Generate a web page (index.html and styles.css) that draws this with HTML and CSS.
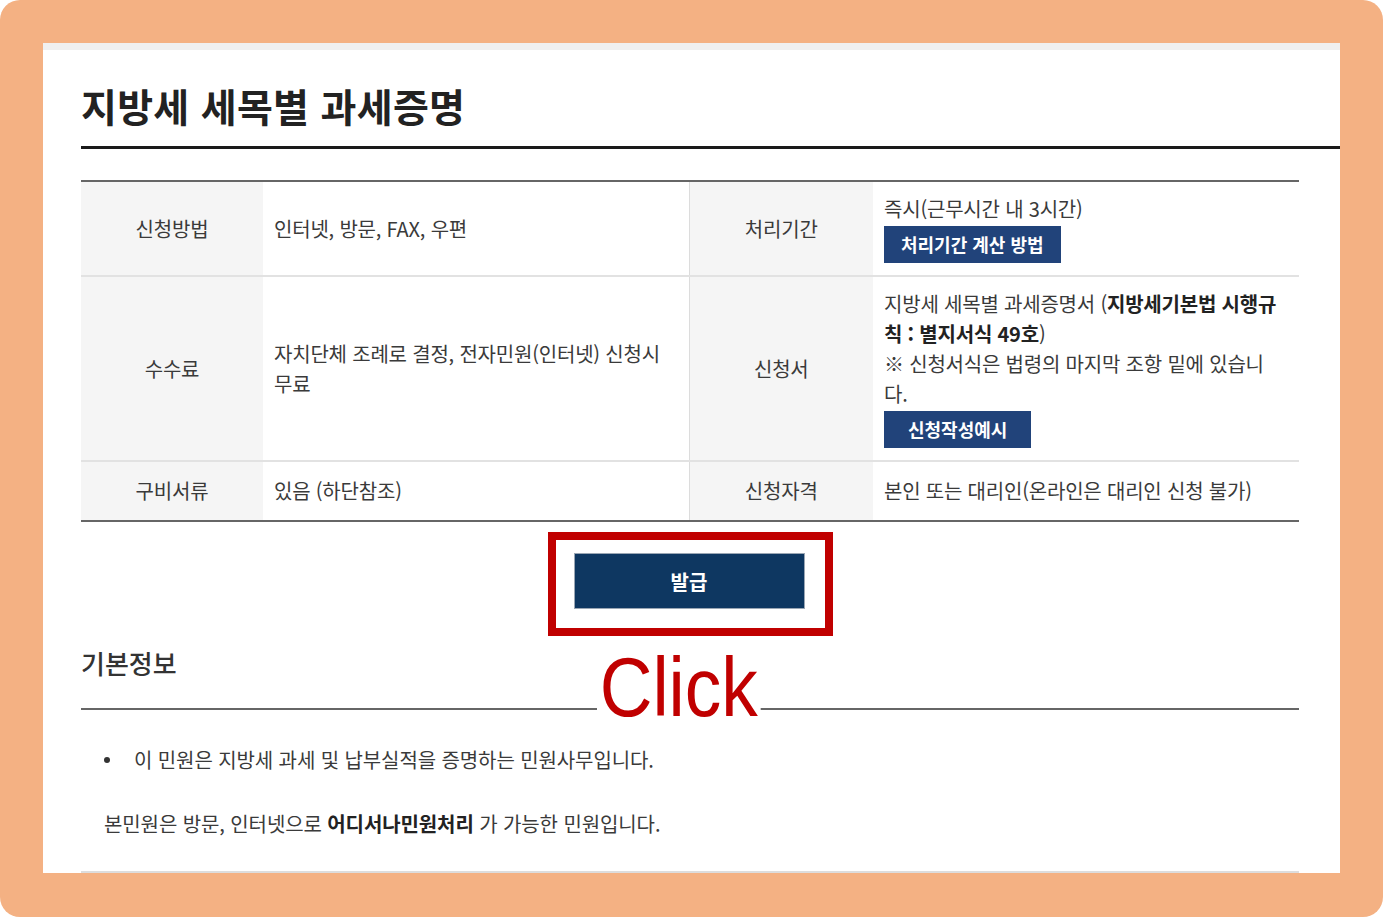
FILE: index.html
```html
<!DOCTYPE html>
<html lang="ko">
<head>
    <meta charset="UTF-8">
    <meta name="viewport" content="width=device-width, initial-scale=1">
    <title>지방세 세목별 과세증명</title>
    <link rel="stylesheet" href="styles.css">
</head>
<body>
    <div class="frame">
        <div class="panel">
            <h1 class="title">지방세 세목별 과세증명</h1>
            <div class="content">
                <table class="info">
                    <colgroup>
                        <col class="c-th"><col class="c-td"><col class="c-th2"><col class="c-td">
                    </colgroup>
                    <tr>
                        <th>신청방법</th>
                        <td>인터넷, 방문, FAX, 우편</td>
                        <th class="mid">처리기간</th>
                        <td>
                            즉시(근무시간 내 3시간)
                            <a class="btn" href="#">처리기간 계산 방법</a>
                        </td>
                    </tr>
                    <tr>
                        <th>수수료</th>
                        <td class="keep">자치단체 조례로 결정, 전자민원(인터넷) 신청시 무료</td>
                        <th class="mid">신청서</th>
                        <td>
                            지방세 세목별 과세증명서 (<b>지방세기본법 시행규칙 : 별지서식 49호</b>)<br>
                            ※ 신청서식은 법령의 마지막 조항 밑에 있습니다.
                            <a class="btn btn-wide" href="#">신청작성예시</a>
                        </td>
                    </tr>
                    <tr class="last">
                        <th>구비서류</th>
                        <td>있음 (하단참조)</td>
                        <th class="mid">신청자격</th>
                        <td>본인 또는 대리인(온라인은 대리인 신청 불가)</td>
                    </tr>
                </table>

                <div class="issue">
                    <div class="issue-mark">
                        <button class="issue-btn" type="button">발급</button>
                    </div>
                </div>

                <div class="basic">
                    <h2 class="basic-title">기본정보</h2>
                    <span class="click">Click</span>
                    <ul class="basic-list">
                        <li>이 민원은 지방세 과세 및 납부실적을 증명하는 민원사무입니다.</li>
                    </ul>
                    <p class="basic-note">본민원은 방문, 인터넷으로 <b>어디서나민원처리</b> 가 가능한 민원입니다.</p>
                    <div class="divider"></div>
                </div>
            </div>
        </div>
    </div>
</body>
</html>
```

FILE: styles.css
```css
body { margin: 0; background: #fff; font-family: "Noto Sans CJK KR", "Noto Sans", sans-serif; color: #3a3a3a; }
.frame { width: 1383px; height: 917px; box-sizing: border-box; padding: 43px 43px 44px; background: #f4b183; border-radius: 20px; }
.panel { height: 100%; background: #fff; border-top: 7px solid #f0f0f0; box-sizing: border-box; overflow: hidden; }

.title { margin: 33px 0 0 38px; padding-bottom: 18px; font-size: 39px; line-height: 45px; font-weight: bold; color: #222; border-bottom: 3px solid #1a1a1a; letter-spacing: 0.3px; }
.content { padding: 0 41px 0 38px; }

.info { width: 100%; margin-top: 31px; border-collapse: collapse; table-layout: fixed; border-top: 2px solid #666; border-bottom: 2px solid #666; font-size: 20px; line-height: 30px; letter-spacing: -0.2px; }
.c-th { width: 182px; }
.c-th2 { width: 184px; }
.c-td { width: 426px; }
.info tr { border-bottom: 2px solid #e2e2e2; }
.info tr.last { border-bottom: none; }
.info th { background: #f5f5f5; font-weight: normal; text-align: center; vertical-align: middle; color: #3a3a3a; }
.info th.mid { border-left: 1px solid #dcdcdc; }
.info td { padding: 12px 16px 12px 11px; vertical-align: middle; }
.info td.keep { word-break: keep-all; }
.info tr.last td, .info tr.last th { padding-top: 14px; padding-bottom: 14px; }
.info b { color: #222; }

.btn { display: block; width: max-content; margin-top: 2px; padding: 0 17px; height: 37px; line-height: 37px; background: #21437a; color: #fff; font-size: 18px; font-weight: bold; text-decoration: none; letter-spacing: 0; }
.btn-wide { padding: 0 24px; }

.issue { margin-top: 10px; text-align: center; }
.issue-mark { display: inline-block; border: 8px solid #c00000; padding: 13px 20px 19px 18px; }
.issue-btn { display: block; width: 231px; height: 56px; border: 1px solid #9aa6b4; background: #0e3761; color: #fff; font-family: inherit; font-size: 20px; font-weight: bold; cursor: pointer; }

.basic { position: relative; margin-top: 10px; }
.basic-title { margin: 0; padding-bottom: 28px; font-size: 26px; line-height: 34px; font-weight: 500; color: #333; border-bottom: 2px solid #666; }
.click { position: absolute; left: 516px; top: 0; padding: 0 3px; background: #fff; color: #c00000; font-family: "Liberation Sans", Arial, sans-serif; font-size: 83px; line-height: 1; transform: scaleX(0.88); transform-origin: left top; }

.basic-list { margin: 35px 0 0; padding: 0; list-style: none; font-size: 20px; line-height: 30px; letter-spacing: -0.1px; }
.basic-list li { display: flex; align-items: center; }
.basic-list li::before { content: ""; width: 6px; height: 6px; margin: 0 24px 0 23px; border-radius: 50%; background: #333; }
.basic-note { margin: 34px 0 0; padding-left: 23px; font-size: 20px; line-height: 30px; letter-spacing: -0.1px; }
.basic-note b { color: #222; }
.divider { margin-top: 32px; border-top: 2px solid #ddd; }
```
